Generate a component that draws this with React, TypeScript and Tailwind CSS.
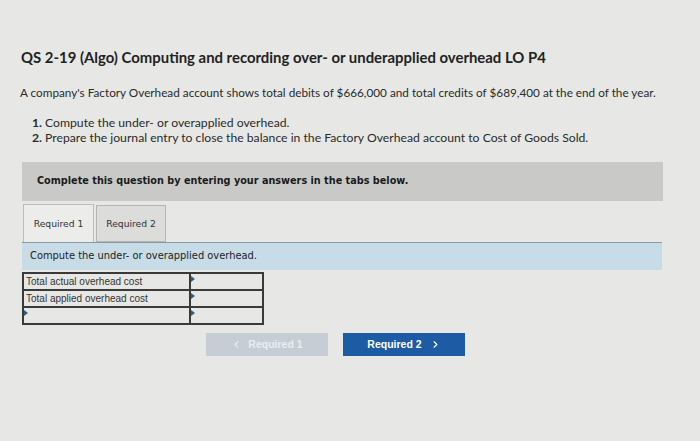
import React from 'react';
import { ChevronLeft, ChevronRight } from 'lucide-react';

const rows = ['Total actual overhead cost', 'Total applied overhead cost', ''];

const Marker = () => (
    <span className="absolute left-0 top-[2px] w-0 h-0 border-t-[3px] border-b-[3px] border-l-[4px] border-t-transparent border-b-transparent border-l-[#2f5d8a]" />
);

export default function App() {
    return (
        <div className="w-[700px] h-[441px] bg-[#e7e8e6] text-[#1d1d1d] overflow-hidden font-['Lato',sans-serif]">
            {/* Question header */}
            <div className="pt-[47px] pl-[21px]">
                <h1 className="text-[14.9px] font-bold leading-[20px] text-[#222]">
                    QS 2-19 (Algo) Computing and recording over- or underapplied overhead LO P4
                </h1>
                <p className="mt-[17px] -ml-[1px] text-[11.75px] leading-[17px] text-[#2a2a2a] whitespace-nowrap">
                    A company's Factory Overhead account shows total debits of $666,000 and total credits of $689,400 at the end of the year.
                </p>
                <ol className="mt-[14px] ml-[11px] text-[12.2px] leading-[15px] text-[#2a2a2a]">
                    <li><span className="font-bold">1.</span> Compute the under- or overapplied overhead.</li>
                    <li><span className="font-bold">2.</span> Prepare the journal entry to close the balance in the Factory Overhead account to Cost of Goods Sold.</li>
                </ol>
            </div>

            {/* Instruction box */}
            <div className="mt-[17px] ml-[22px] w-[641px] h-[39px] bg-[#c9cac8] flex items-center pl-[15px]">
                <span className="font-['DejaVu_Sans',sans-serif] text-[9.7px] font-bold text-[#1a1a1a]">
                    Complete this question by entering your answers in the tabs below.
                </span>
            </div>

            {/* Tabs */}
            <div className="ml-[23px] mt-[3px] flex items-end gap-[2px]">
                <div className="w-[71px] h-[38px] bg-[#ececea] border border-b-0 border-[#bdbdbb] flex items-center justify-center font-['DejaVu_Sans',sans-serif] text-[9.2px] text-[#333]">
                    Required 1
                </div>
                <div className="w-[70px] h-[37px] bg-[#dcdcda] border border-[#b5b5b3] flex items-center justify-center font-['DejaVu_Sans',sans-serif] text-[9.2px] text-[#333]">
                    Required 2
                </div>
            </div>

            {/* Tab content */}
            <div className="ml-[22px] w-[640px] h-[28px] bg-[#c8dce7] border-t border-[#8a9aa3] flex items-center pl-[8px]">
                <span className="font-['DejaVu_Sans',sans-serif] text-[9.9px] text-[#222]">
                    Compute the under- or overapplied overhead.
                </span>
            </div>

            <table className="ml-[22px] mt-[2px] w-[242px] border-collapse border-2 border-[#3a3a3a] font-['Liberation_Sans',sans-serif] text-[10px] text-[#333]">
                <tbody>
                    {rows.map((label, i) => (
                        <tr key={i} className="h-[17px]">
                            <td className="w-[167px] border-2 border-[#3a3a3a] px-[2px] leading-[13px] relative">
                                {i === 2 && <Marker />}
                                {label}
                            </td>
                            <td className="border-2 border-[#3a3a3a] relative">
                                <Marker />
                            </td>
                        </tr>
                    ))}
                </tbody>
            </table>

            {/* Navigation */}
            <div className="mt-[8px] ml-[206px] flex gap-[15px] font-['Liberation_Sans',sans-serif] text-[10.5px] font-bold">
                <button className="w-[122px] h-[23px] bg-[#c6cdd5] text-[#e9edf1] flex items-center justify-center gap-[6px]">
                    <ChevronLeft size={11} strokeWidth={2.5} />
                    <span>Required 1</span>
                </button>
                <button className="w-[122px] h-[23px] bg-[#1d5ba5] text-white flex items-center justify-center gap-[8px]">
                    <span>Required 2</span>
                    <ChevronRight size={11} strokeWidth={2.5} />
                </button>
            </div>
        </div>
    );
}
